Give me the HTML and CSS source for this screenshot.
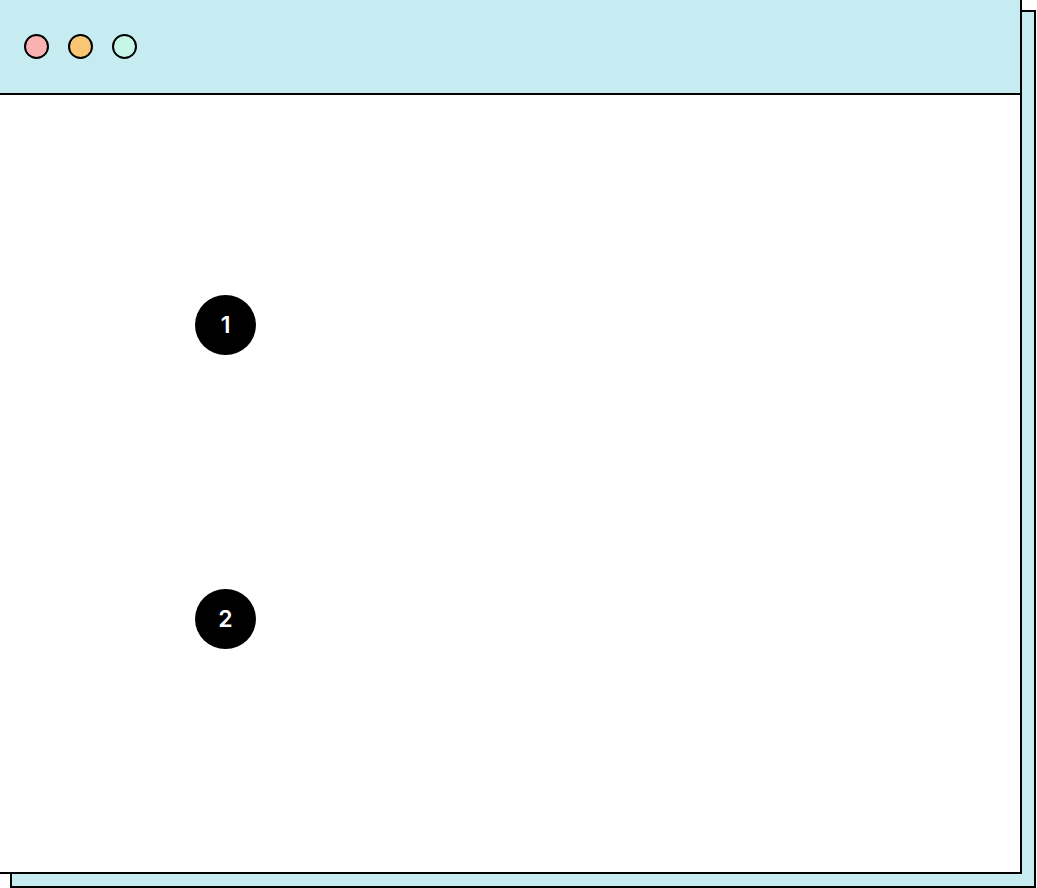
FILE: index.html
```html
<!DOCTYPE html>
<html lang="en">
<head>
<meta charset="utf-8">
<title>Window</title>
<link rel="stylesheet" href="styles.css">
</head>
<body>
<div class="stage">
  <div class="window window-back"></div>
  <div class="window window-front">
    <div class="titlebar">
      <span class="dot dot-red"></span>
      <span class="dot dot-yellow"></span>
      <span class="dot dot-green"></span>
    </div>
    <div class="content">
      <div class="badge">1</div>
      <div class="badge">2</div>
    </div>
  </div>
</div>
</body>
</html>
```

FILE: styles.css
```css
html, body {
  margin: 0;
  padding: 0;
  background: #ffffff;
  overflow: hidden;
}

.stage {
  position: relative;
  width: 1037px;
  height: 888px;
}

.window {
  position: absolute;
  width: 1026px;
  height: 878px;
  box-sizing: border-box;
  border: 2px solid #000;
}

.window-back {
  left: 10px;
  top: 10px;
  background: #c6ecf2;
}

.window-front {
  left: -4px;
  top: -4px;
  background: #ffffff;
  display: flex;
  flex-direction: column;
}

.titlebar {
  height: 97px;
  box-sizing: border-box;
  border-bottom: 2px solid #000;
  background: #c6ecf2;
  display: flex;
  align-items: center;
  gap: 19px;
  padding: 2px 0 0 26px;
}

.dot {
  width: 25px;
  height: 25px;
  box-sizing: border-box;
  border: 2px solid #000;
  border-radius: 50%;
}

.dot-red { background: #f9b1b1; }
.dot-yellow { background: #f9c674; }
.dot-green { background: #c6f6e5; }

.content {
  display: flex;
  flex-direction: column;
  gap: 234px;
  padding: 200px 0 0 197px;
}

.badge {
  width: 61px;
  height: 60px;
  border-radius: 50%;
  background: #000;
  color: #fff;
  font-family: Inter, "Open Sans", sans-serif;
  font-weight: 600;
  font-size: 23px;
  display: flex;
  align-items: center;
  justify-content: center;
}
```
